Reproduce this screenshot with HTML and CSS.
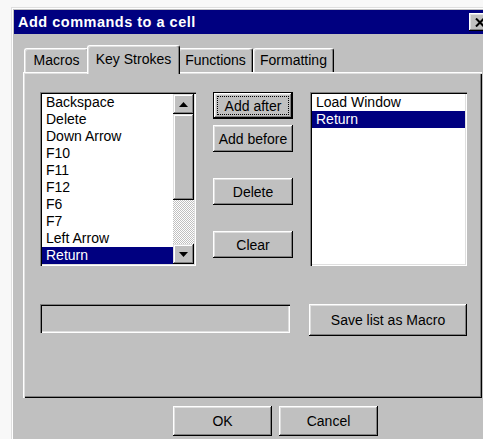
FILE: index.html
```html
<!DOCTYPE html>
<html lang="en">
<head>
<meta charset="utf-8">
<title>Add commands to a cell</title>
<link rel="stylesheet" href="styles.css">
</head>
<body>
<div class="window">
  <div class="titlebar">
    <span class="title">Add commands to a cell</span>
    <span class="close" aria-label="Close">
      <svg width="10" height="9" viewBox="0 0 10 9"><path d="M1 0.5 L9 8.5 M9 0.5 L1 8.5" stroke="#000" stroke-width="2" fill="none"/></svg>
    </span>
  </div>
  <div class="content">
    <div class="tabs">
      <div class="tab tab-macros">Macros</div>
      <div class="tab tab-keys active">Key Strokes</div>
      <div class="tab tab-func">Functions</div>
      <div class="tab tab-fmt">Formatting</div>
    </div>
    <div class="panel">
      <div class="lists">
        <div class="listbox">
          <ul class="items">
            <li>Backspace</li>
            <li>Delete</li>
            <li>Down Arrow</li>
            <li>F10</li>
            <li>F11</li>
            <li>F12</li>
            <li>F6</li>
            <li>F7</li>
            <li>Left Arrow</li>
            <li class="selected">Return</li>
          </ul>
          <div class="scrollbar">
            <div class="sb-btn">
              <svg width="9" height="5" viewBox="0 0 9 5"><path d="M4.5 0 L9 5 L0 5 Z" fill="#000"/></svg>
            </div>
            <div class="sb-thumb"></div>
            <div class="sb-track"></div>
            <div class="sb-btn">
              <svg width="9" height="5" viewBox="0 0 9 5"><path d="M0 0 L9 0 L4.5 5 Z" fill="#000"/></svg>
            </div>
          </div>
        </div>
        <div class="actions">
          <button class="btn default"><span class="focus">Add after</span></button>
          <button class="btn act-before">Add before</button>
          <button class="btn act-delete">Delete</button>
          <button class="btn act-clear">Clear</button>
        </div>
        <div class="listbox">
          <ul class="items">
            <li>Load Window</li>
            <li class="selected">Return</li>
          </ul>
        </div>
      </div>
      <div class="save-row">
        <div class="field"></div>
        <button class="btn save">Save list as Macro</button>
      </div>
    </div>
    <div class="footer">
      <button class="btn dlg">OK</button>
      <button class="btn dlg">Cancel</button>
    </div>
  </div>
</div>
</body>
</html>
```
FILE: styles.css
```css
html, body {
  margin: 0;
  padding: 0;
}

body {
  width: 483px;
  height: 439px;
  overflow: hidden;
  background: #f8f8f8;
  font-family: "Liberation Sans", Arial, sans-serif;
  font-size: 14px;
  color: #000;
}

/* Dialog frame */
.window {
  margin: 7px 0 0 11px;
  width: 484px;
  height: 440px;
  box-sizing: border-box;
  padding: 3px;
  background: #c0c0c0;
  box-shadow: inset 1px 1px #dfdfdf, inset 2px 2px #fff,
              inset -1px -1px #000, inset -2px -2px #808080;
}

.titlebar {
  height: 24px;
  background: #000080;
  color: #fff;
  display: flex;
  align-items: center;
  justify-content: space-between;
  padding-left: 4px;
}

.title {
  font-weight: bold;
  font-size: 14.5px;
  letter-spacing: 0.5px;
}

.close {
  width: 21px;
  height: 18px;
  margin-right: 2px;
  background: #c0c0c0;
  display: flex;
  align-items: center;
  justify-content: center;
  box-sizing: border-box;
  box-shadow: inset -1px -1px #000, inset 1px 1px #fff,
              inset -2px -2px #808080, inset 2px 2px #dfdfdf;
}

.content {
  padding: 11px 10px 0 9px;
}

/* Tab strip */
.tabs {
  display: flex;
  align-items: flex-end;
  height: 27px;
  padding-left: 1px;
}

.tab {
  height: 24px;
  box-sizing: border-box;
  display: flex;
  align-items: center;
  justify-content: center;
  border-top: 1px solid #fff;
  border-left: 1px solid #fff;
  border-right: 1px solid #000;
  border-radius: 3px 3px 0 0;
  box-shadow: inset -1px 0 #808080, inset 1px 1px #dfdfdf;
  background: #c0c0c0;
  padding-bottom: 1px;
}

.tab-macros { width: 65px; }
.tab-func { width: 75px; }
.tab-fmt { width: 81px; }

.tab.active {
  width: 93px;
  height: 29px;
  margin: 0 -2px -2px;
  padding-bottom: 3px;
  position: relative;
  z-index: 1;
}

/* Tab page */
.panel {
  width: 459px;
  height: 326px;
  box-sizing: border-box;
  padding: 20px 15px 0 17px;
  box-shadow: inset 1px 1px #fff, inset 2px 2px #dfdfdf,
              inset -1px -1px #000, inset -2px -2px #808080;
}

.lists {
  display: grid;
  grid-template-columns: 156px 80px 157px;
  column-gap: 17px;
  align-items: start;
}

.listbox {
  height: 174px;
  box-sizing: border-box;
  padding: 2px;
  background: #fff;
  display: flex;
  box-shadow: inset 1px 1px #808080, inset 2px 2px #000,
              inset -1px -1px #fff, inset -2px -2px #dfdfdf;
}

.items {
  list-style: none;
  margin: 0;
  padding: 0;
  flex: 1;
}

.items li {
  height: 17px;
  line-height: 17px;
  padding-left: 4px;
  white-space: nowrap;
}

.items li.selected {
  background: #000080;
  color: #fff;
}

/* Vertical scroll bar */
.scrollbar {
  width: 21px;
  display: flex;
  flex-direction: column;
}

.sb-btn, .sb-thumb {
  background: #c0c0c0;
  box-shadow: inset -1px -1px #000, inset 1px 1px #dfdfdf,
              inset -2px -2px #808080, inset 2px 2px #fff;
}

.sb-btn {
  height: 20px;
  display: flex;
  align-items: center;
  justify-content: center;
}

.sb-thumb {
  height: 86px;
}

.sb-track {
  flex: 1;
  background: repeating-conic-gradient(#c0c0c0 0 25%, #fff 0 50%) 0 0 / 2px 2px;
}

/* Push buttons */
.btn {
  font-family: inherit;
  font-size: 14px;
  color: #000;
  margin: 0;
  padding: 0;
  border: none;
  background: #c0c0c0;
  box-sizing: border-box;
  box-shadow: inset -1px -1px #000, inset 1px 1px #fff,
              inset -2px -2px #808080, inset 2px 2px #dfdfdf;
  display: flex;
  align-items: center;
  justify-content: center;
}

.btn.default {
  border: 1px solid #000;
  align-items: stretch;
  padding: 3px;
}

.focus {
  flex: 1;
  border: 1px dotted #000;
  display: flex;
  align-items: center;
  justify-content: center;
}

.actions {
  display: flex;
  flex-direction: column;
}

.actions .btn {
  width: 80px;
  height: 27px;
}

.actions .act-before { margin-top: 6px; }
.actions .act-delete { margin-top: 26px; }
.actions .act-clear { margin-top: 26px; }

.save-row {
  display: flex;
  align-items: flex-start;
  margin-top: 38px;
}

.field {
  width: 250px;
  height: 29px;
  box-sizing: border-box;
  background: #c0c0c0;
  box-shadow: inset 1px 1px #808080, inset 2px 2px #000,
              inset -1px -1px #fff, inset -2px -2px #dfdfdf;
}

.btn.save {
  width: 158px;
  height: 32px;
  margin-left: 19px;
}

.footer {
  display: flex;
  gap: 7px;
  margin-top: 8px;
  padding-left: 150px;
}

.btn.dlg {
  width: 99px;
  height: 30px;
}
```
